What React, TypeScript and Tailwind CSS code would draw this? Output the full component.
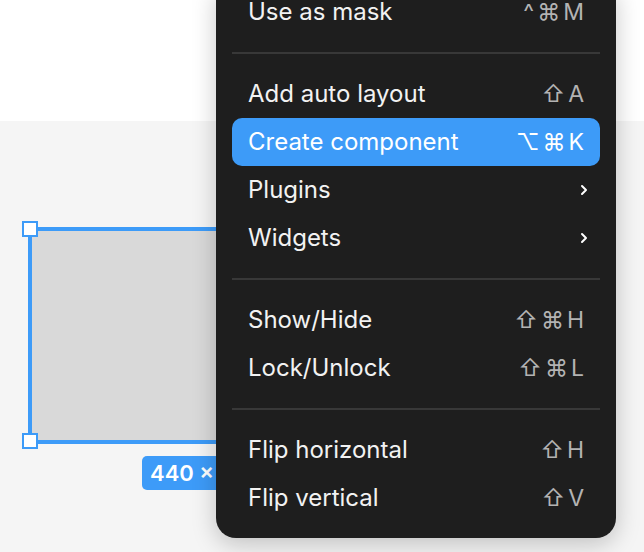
import React from 'react';

type Item = { label: string; keys?: string[]; submenu?: boolean; active?: boolean };

const groups: Item[][] = [
  [{ label: 'Use as mask', keys: ['^', '⌘', 'M'] }],
  [
    { label: 'Add auto layout', keys: ['⇧', 'A'] },
    { label: 'Create component', keys: ['⌥', '⌘', 'K'], active: true },
    { label: 'Plugins', submenu: true },
    { label: 'Widgets', submenu: true },
  ],
  [
    { label: 'Show/Hide', keys: ['⇧', '⌘', 'H'] },
    { label: 'Lock/Unlock', keys: ['⇧', '⌘', 'L'] },
  ],
  [
    { label: 'Flip horizontal', keys: ['⇧', 'H'] },
    { label: 'Flip vertical', keys: ['⇧', 'V'] },
  ],
];

const Chevron = () => (
  <svg width="8" height="12" viewBox="0 0 8 12" fill="none">
    <path d="M2 2l4 4-4 4" stroke="currentColor" strokeWidth="2" strokeLinecap="round" strokeLinejoin="round" />
  </svg>
);

const MenuRow: React.FC<{ item: Item }> = ({ item }) => (
  <div
    className={`flex h-12 items-center justify-between rounded-[10px] px-4 ${
      item.active ? 'bg-[#3d9bf8] text-white' : 'text-[#f2f2f2]'
    }`}
  >
    <span className="text-[24px] leading-none">{item.label}</span>
    {item.keys && (
      <span className={`flex items-center gap-[3px] text-[23px] leading-none ${item.active ? 'text-white' : 'text-[#b3b3b3]'}`}>
        {item.keys.map((k, i) => (
          <span key={i}>{k}</span>
        ))}
      </span>
    )}
    {item.submenu && (
      <span className="mr-[-4px] text-white">
        <Chevron />
      </span>
    )}
  </div>
);

export default function App() {
  return (
    <div
      className="relative flex h-[552px] w-[644px] flex-col overflow-hidden"
      style={{ fontFamily: 'Inter, "DejaVu Sans", sans-serif' }}
    >
      <div className="h-[121px] bg-white" />
      <div className="flex-1 bg-[#f5f5f5]" />

      {/* selected frame on the canvas */}
      <div className="absolute left-[28px] top-[227px] h-[217px] w-[344px] border-4 border-[#3d9bf8] bg-[#d9d9d9]" />
      <div className="absolute left-[22px] top-[221px] h-4 w-4 border-2 border-[#3d9bf8] bg-white" />
      <div className="absolute left-[22px] top-[433px] h-4 w-4 border-2 border-[#3d9bf8] bg-white" />
      <div className="absolute left-[364px] top-[221px] h-4 w-4 border-2 border-[#3d9bf8] bg-white" />
      <div className="absolute left-[364px] top-[433px] h-4 w-4 border-2 border-[#3d9bf8] bg-white" />
      <div className="absolute left-[142px] top-[456px] flex h-[34px] items-center rounded-[5px] bg-[#3d9bf8] px-2 text-[22px] font-semibold text-white">
        440 × 216
      </div>

      {/* context menu */}
      <div className="absolute left-[216px] top-[-12px] w-[400px] rounded-b-[20px] bg-[#1e1e1e] px-4 pb-4 shadow-[0_6px_24px_rgba(0,0,0,0.22)]">
        {groups.map((g, gi) => (
          <div key={gi}>
            {gi > 0 && <div className="my-4 h-[2px] bg-[#383838]" />}
            {g.map((item) => (
              <MenuRow key={item.label} item={item} />
            ))}
          </div>
        ))}
      </div>
    </div>
  );
}
